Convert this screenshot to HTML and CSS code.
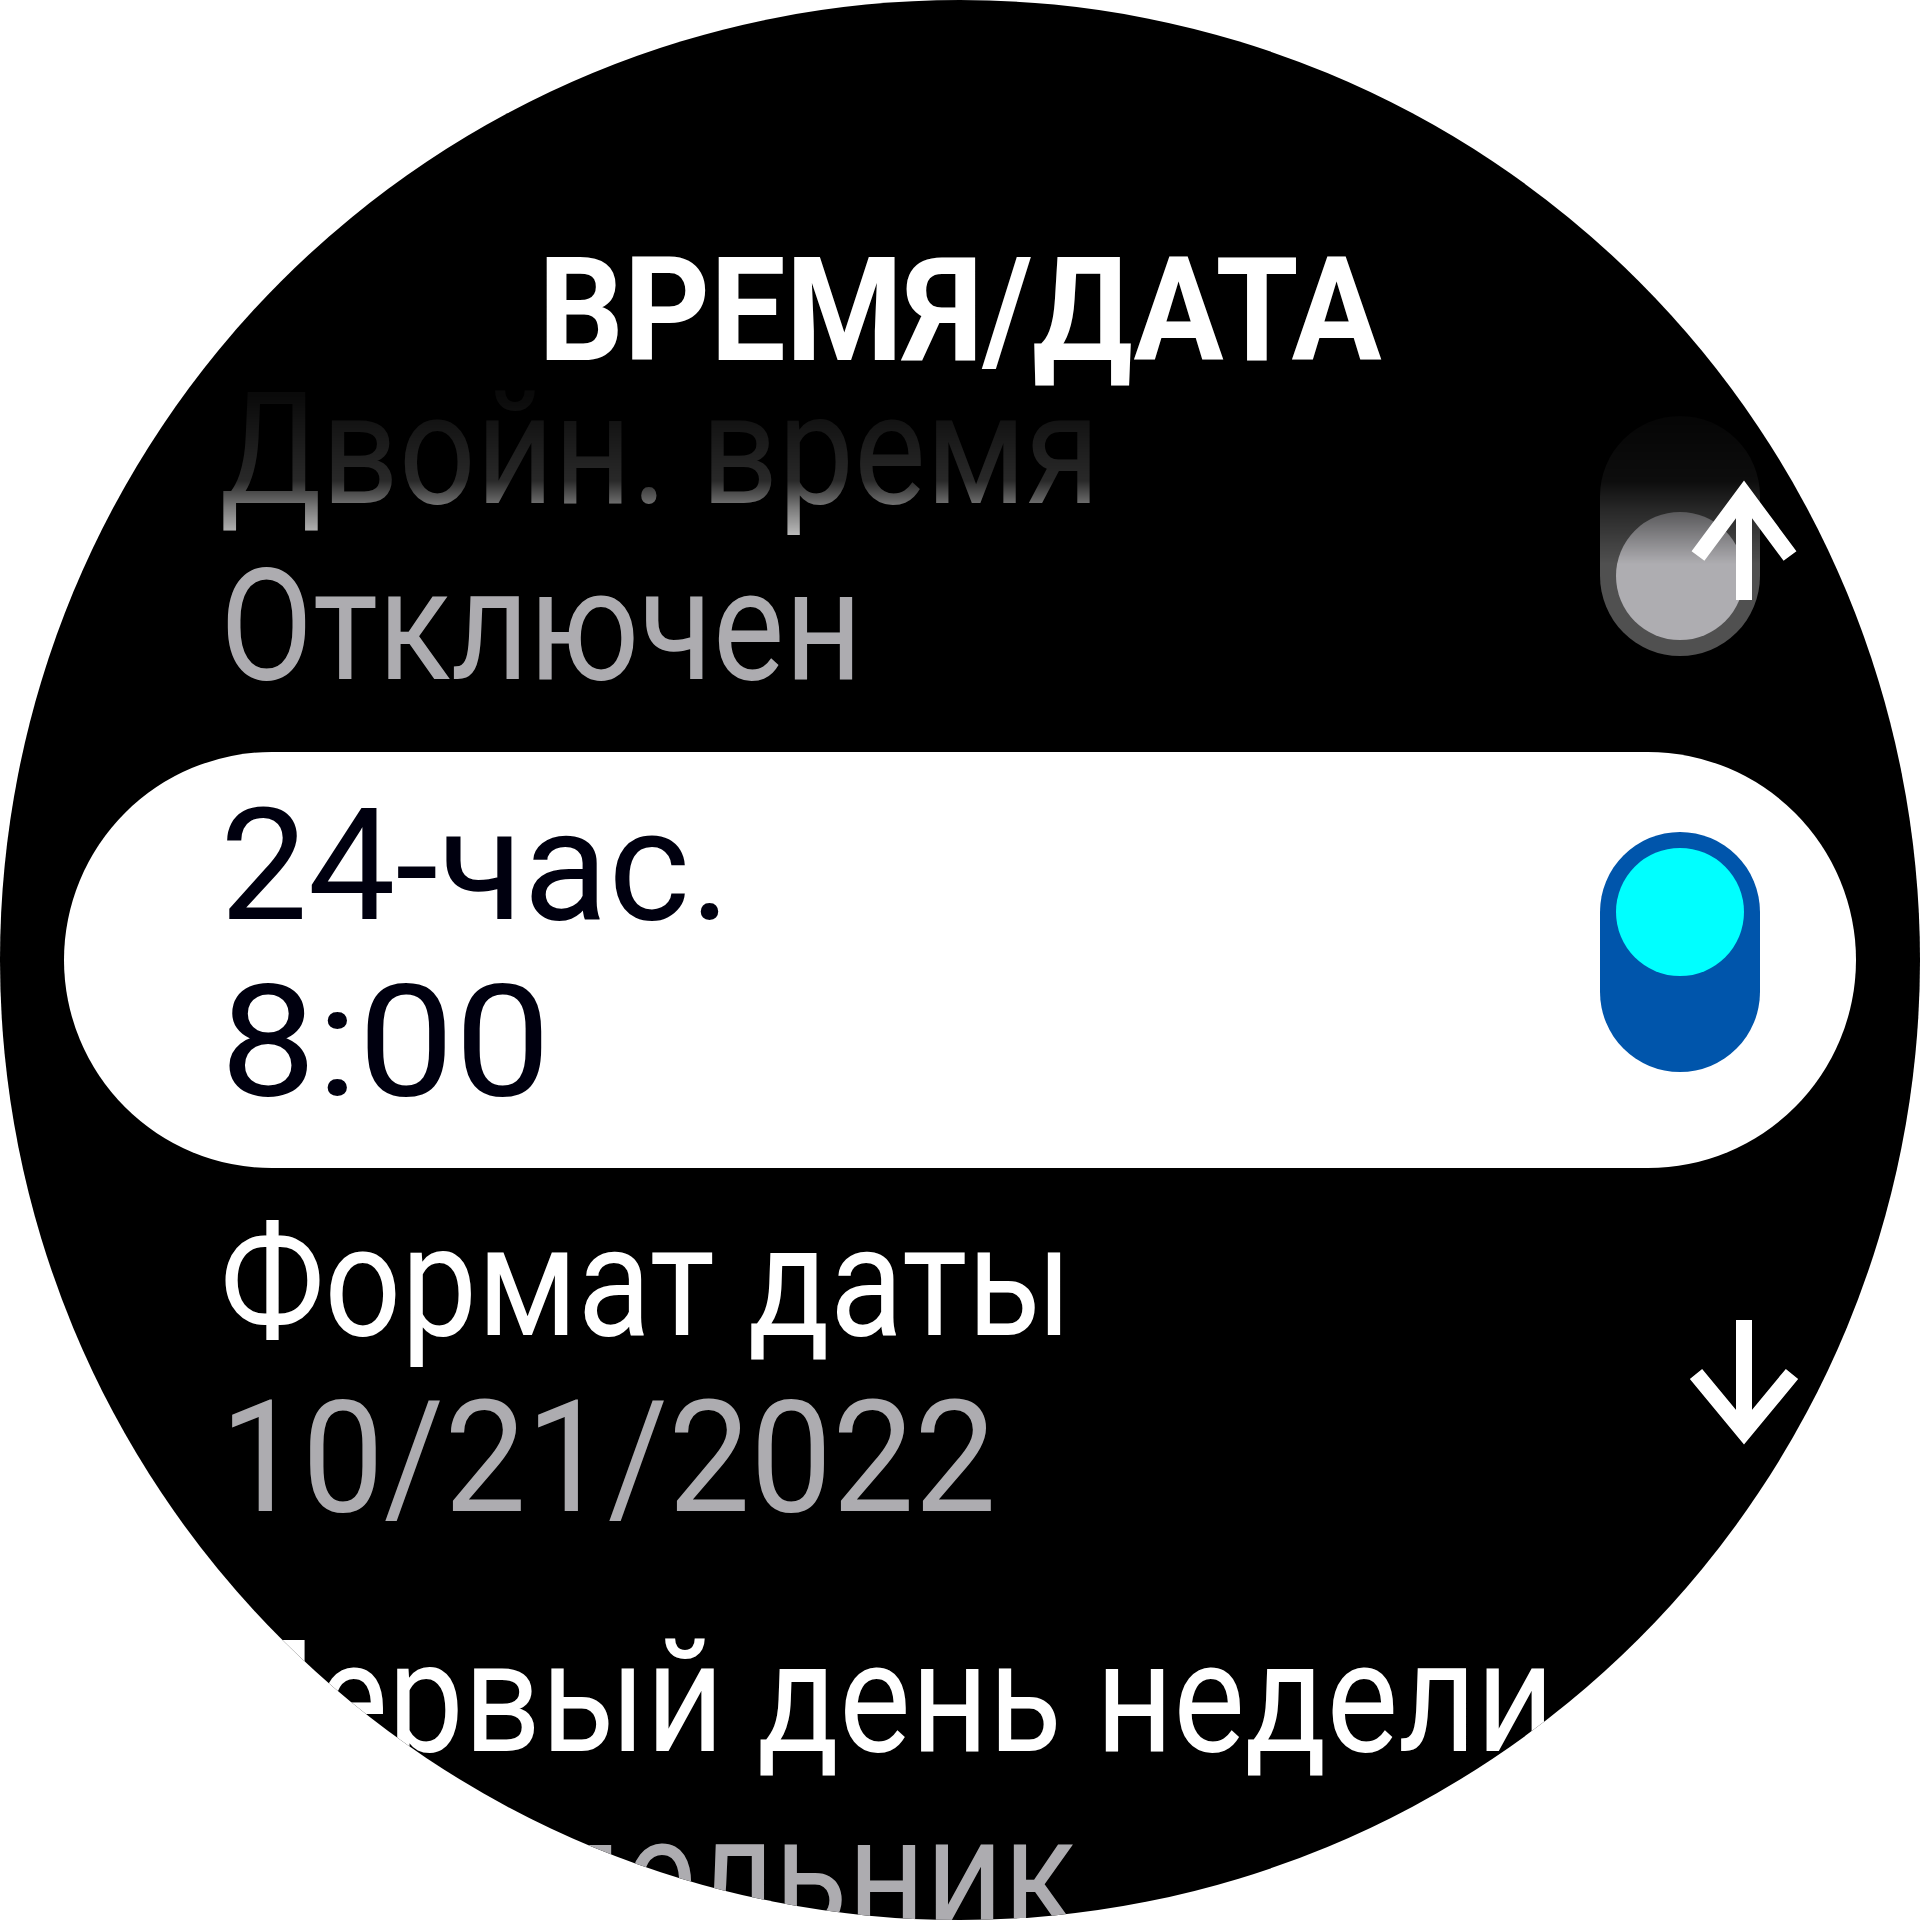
FILE: index.html
```html
<!DOCTYPE html>
<html lang="ru">
<head>
<meta charset="utf-8">
<title>Время/Дата</title>
<link rel="stylesheet" href="styles.css">
</head>
<body>
<div class="screen">
  <h1 class="title"><span class="title-text">ВРЕМЯ/ДАТА</span></h1>
  <ul class="list">
    <li class="item item--faded">
      <div class="text">
        <span class="line label narrow">Двойн. время</span>
        <span class="line value narrow">Отключен</span>
      </div>
      <span class="toggle toggle--off"><span class="knob"></span></span>
    </li>
    <li class="item item--selected">
      <div class="text">
        <span class="line label">24-час.</span>
        <span class="line label wide">8:00</span>
      </div>
      <span class="toggle toggle--on"><span class="knob"></span></span>
    </li>
    <li class="item">
      <div class="text">
        <span class="line label narrow">Формат даты</span>
        <span class="line value digits">10/21/2022</span>
      </div>
    </li>
    <li class="item">
      <div class="text">
        <span class="line label narrow">Первый день недели</span>
        <span class="line value narrow">Понедельник</span>
      </div>
    </li>
  </ul>
  <svg class="arrow arrow--up" width="130" height="140" viewBox="0 0 130 140">
    <path d="M64 26 V130 M18 86 L64 24 L110 86" fill="none" stroke="#fff" stroke-width="16" stroke-linejoin="miter"/>
  </svg>
  <svg class="arrow arrow--down" width="130" height="150" viewBox="0 0 130 150">
    <path d="M64 10 V120 M16 64 L64 122 L112 64" fill="none" stroke="#fff" stroke-width="16" stroke-linejoin="miter"/>
  </svg>
</div>
</body>
</html>
```
FILE: styles.css
```css
html, body {
  margin: 0;
  padding: 0;
  background: #fff;
}
body {
  width: 1920px;
  height: 1920px;
  font-family: Roboto, "Noto Sans", sans-serif;
}
.screen {
  position: relative;
  width: 1920px;
  height: 1920px;
  border-radius: 50%;
  background: #000;
  overflow: hidden;
}
.title {
  margin: 0;
  height: 336px;
  box-sizing: border-box;
  padding-top: 258px;
  font-size: 145px;
  line-height: 104px;
  font-weight: 700;
  color: #fff;
  text-align: center;
  white-space: nowrap;
}
.title-text {
  display: inline-block;
  transform: scaleX(0.925);
  transform-origin: center;
}
.list {
  margin: 0;
  padding: 0;
  list-style: none;
}
.item {
  display: flex;
  align-items: center;
  height: 416px;
  box-sizing: border-box;
  margin: 0 64px;
  padding: 0 96px 0 156px;
  border-radius: 208px;
}
.item--faded {
  -webkit-mask-image: linear-gradient(to bottom, rgba(0,0,0,0.04) 60px, rgba(0,0,0,0.16) 145px, rgba(0,0,0,0.48) 172px, #000 228px);
  mask-image: linear-gradient(to bottom, rgba(0,0,0,0.04) 60px, rgba(0,0,0,0.16) 145px, rgba(0,0,0,0.48) 172px, #000 228px);
}
.item--selected {
  background: #fff;
}
.text {
  flex: 1;
  align-self: flex-start;
  display: flex;
  flex-direction: column;
  align-items: flex-start;
  padding-top: 26px;
}
.line {
  display: block;
  font-size: 156px;
  line-height: 176px;
  white-space: nowrap;
  transform-origin: left center;
}
.narrow {
  transform: scaleX(0.866);
}
.digits {
  transform: scaleX(0.935);
}
.wide {
  transform: scaleX(1.1);
}
.label {
  color: #fff;
}
.value {
  color: #adacb0;
}
.item--selected .label {
  color: #00000f;
}
.toggle {
  flex: none;
  display: flex;
  flex-direction: column;
  box-sizing: border-box;
  width: 160px;
  height: 240px;
  padding: 16px;
  margin-bottom: 16px;
  border-radius: 80px;
}
.knob {
  width: 128px;
  height: 128px;
  border-radius: 50%;
}
.toggle--on {
  background: #0055ab;
  justify-content: flex-start;
}
.toggle--on .knob {
  background: #00ffff;
}
.toggle--off {
  background: #505050;
  justify-content: flex-end;
}
.toggle--off .knob {
  background: #aeadb1;
}
.arrow {
  position: absolute;
  left: 1680px;
}
.arrow--up {
  top: 470px;
}
.arrow--down {
  top: 1310px;
}
```
